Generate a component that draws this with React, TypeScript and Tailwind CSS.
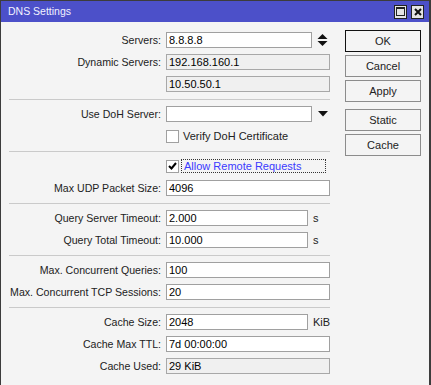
import React from "react";

type FieldProps = {
  label?: string;
  value: string;
  width?: string;
  readOnly?: boolean;
  unit?: string;
  after?: React.ReactNode;
};

// Ligne label + champ
function Field({ label, value, width = "w-[164px]", readOnly, unit, after }: FieldProps) {
  return (
    <div className="flex h-4 items-center">
      <div className="w-[161px] shrink-0 whitespace-nowrap pr-[1px] text-right text-[10.6px] leading-none text-[#222]">
        {label ? `${label}:` : ""}
      </div>
      <div
        className={`ml-[4px] flex h-4 items-center border pl-[2px] text-[11px] leading-none text-black ${width} ${
          readOnly ? "border-[#a8a8a8] bg-[#f0f0f0]" : "border-[#a0a0a0] bg-white"
        }`}
      >
        {value}
      </div>
      {unit && <span className="ml-[5px] text-[11px] leading-none text-[#222]">{unit}</span>}
      {after}
    </div>
  );
}

function Separator() {
  return <div className="mt-px ml-[8px] h-px w-[321px] bg-[#cacaca]" />;
}

function CheckRow({ label, checked, focused }: { label: string; checked?: boolean; focused?: boolean }) {
  return (
    <div className="flex h-4 items-center">
      <div className="ml-[165px] flex h-[13px] w-[13px] items-center justify-center border border-[#a0a0a0] bg-white">
        {checked && (
          <svg width="9" height="8" viewBox="0 0 9 8">
            <path d="M1 4 L3.5 6.5 L8 1" stroke="#000" strokeWidth="2" fill="none" />
          </svg>
        )}
      </div>
      {focused ? (
        <span className="ml-[2px] flex h-[14px] w-[145px] items-center border border-dotted border-[#333] pl-[2px] text-[11px] leading-none text-[#3a3aff]">
          {label}
        </span>
      ) : (
        <span className="ml-[4px] text-[11px] leading-none text-[#222]">{label}</span>
      )}
    </div>
  );
}

function Btn({ children, primary }: { children: React.ReactNode; primary?: boolean }) {
  return (
    <div
      className={`flex h-[22px] w-[76px] items-center justify-center border bg-[#f4f4f4] text-[11px] text-[#222] ${
        primary ? "border-[#111]" : "border-[#8c8c8c]"
      }`}
    >
      {children}
    </div>
  );
}

export default function App() {
  return (
    <div className="flex h-[385px] w-[431px] flex-col overflow-hidden border-t border-l border-r-2 border-[#3c3c3c] bg-[#f4f4f4] font-['Liberation_Sans',Arial,sans-serif]">
      {/* Barre de titre */}
      <div className="flex h-[21px] shrink-0 items-center bg-[#4c50c9] pl-[7px] pr-[5px]">
        <span className="text-[10.5px] text-[#f2f2ff]">DNS Settings</span>
        <div className="ml-auto flex gap-[4px]">
          <div className="flex h-[14px] w-[13px] items-center justify-center border border-[#222] bg-[#e4e4e4]">
            <div className="h-[9px] w-[9px] border border-t-2 border-[#222]" />
          </div>
          <div className="flex h-[14px] w-[13px] items-center justify-center border border-[#222] bg-[#e4e4e4]">
            <svg width="8" height="8" viewBox="0 0 8 8">
              <path d="M1 1 L7 7 M7 1 L1 7" stroke="#111" strokeWidth="2" />
            </svg>
          </div>
        </div>
      </div>

      <div className="flex flex-1">
        {/* Formulaire */}
        <div className="flex w-[343px] shrink-0 flex-col gap-[6px] pt-[10px]">
          <Field
            label="Servers"
            value="8.8.8.8"
            width="w-[146px]"
            after={
              <svg className="ml-[5px]" width="11" height="14" viewBox="0 0 11 14">
                <polygon points="0.5,6 5.5,1 10.5,6" fill="#111" />
                <polygon points="0.5,8 10.5,8 5.5,13" fill="#111" />
              </svg>
            }
          />
          <Field label="Dynamic Servers" value="192.168.160.1" readOnly />
          <Field value="10.50.50.1" readOnly />
          <Separator />
          <Field
            label="Use DoH Server"
            value=""
            width="w-[146px]"
            after={
              <svg className="ml-[6px]" width="10" height="6" viewBox="0 0 10 6">
                <polygon points="0,0 10,0 5,5.5" fill="#111" />
              </svg>
            }
          />
          <CheckRow label="Verify DoH Certificate" />
          <Separator />
          <CheckRow label="Allow Remote Requests" checked focused />
          <Field label="Max UDP Packet Size" value="4096" />
          <Separator />
          <Field label="Query Server Timeout" value="2.000" width="w-[142px]" unit="s" />
          <Field label="Query Total Timeout" value="10.000" width="w-[142px]" unit="s" />
          <Separator />
          <Field label="Max. Concurrent Queries" value="100" />
          <Field label="Max. Concurrent TCP Sessions" value="20" />
          <Separator />
          <Field label="Cache Size" value="2048" width="w-[142px]" unit="KiB" />
          <Field label="Cache Max TTL" value="7d 00:00:00" />
          <Field label="Cache Used" value="29 KiB" readOnly />
        </div>

        {/* Boutons */}
        <div className="flex flex-col gap-[3px] pt-[8px] pl-[1px]">
          <Btn primary>OK</Btn>
          <Btn>Cancel</Btn>
          <Btn>Apply</Btn>
          <div className="mt-[4px]">
            <Btn>Static</Btn>
          </div>
          <Btn>Cache</Btn>
        </div>
      </div>
    </div>
  );
}
